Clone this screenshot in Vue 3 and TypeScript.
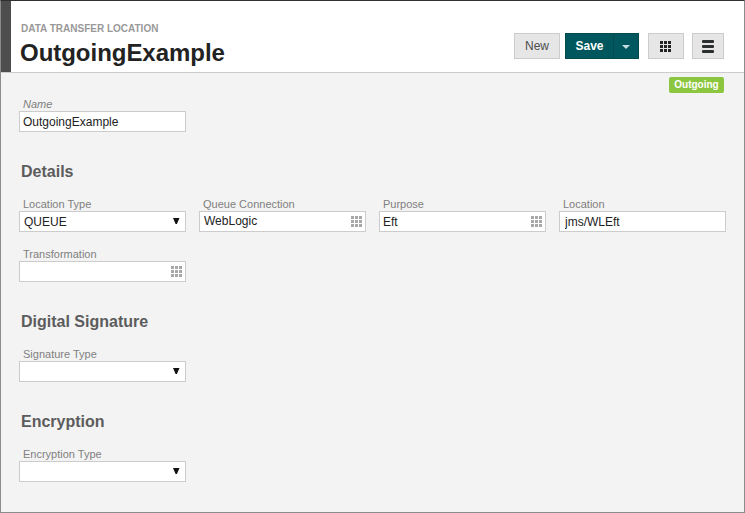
<script setup lang="ts">
import { reactive } from 'vue'

type Kind = 'text' | 'select' | 'lookup'

interface Field {
  id: string
  label: string
  value: string
  kind: Kind
}

interface Section {
  title: string
  fields: Field[]
}

const sections = reactive<Section[]>([
  {
    title: '',
    fields: [{ id: 'name', label: 'Name', value: 'OutgoingExample', kind: 'text' }],
  },
  {
    title: 'Details',
    fields: [
      { id: 'location-type', label: 'Location Type', value: 'QUEUE', kind: 'select' },
      { id: 'queue-connection', label: 'Queue Connection', value: 'WebLogic', kind: 'lookup' },
      { id: 'purpose', label: 'Purpose', value: 'Eft', kind: 'lookup' },
      { id: 'location', label: 'Location', value: 'jms/WLEft', kind: 'text' },
      { id: 'transformation', label: 'Transformation', value: '', kind: 'lookup' },
    ],
  },
  {
    title: 'Digital Signature',
    fields: [{ id: 'signature-type', label: 'Signature Type', value: '', kind: 'select' }],
  },
  {
    title: 'Encryption',
    fields: [{ id: 'encryption-type', label: 'Encryption Type', value: '', kind: 'select' }],
  },
])

const gridPath =
  'M0 0h3v3H0zM4 0h3v3H4zM8 0h3v3H8zM0 4h3v3H0zM4 4h3v3H4zM8 4h3v3H8zM0 8h3v3H0zM4 8h3v3H4zM8 8h3v3H8z'
</script>

<template>
  <div class="page">
    <header class="header">
      <div class="accent"></div>
      <div class="titles">
        <div class="kicker">DATA TRANSFER LOCATION</div>
        <h1>OutgoingExample</h1>
      </div>
      <div class="actions">
        <button class="btn new">New</button>
        <div class="split">
          <button class="save">Save</button>
          <button class="more" aria-label="More save options">
            <svg width="8" height="4" viewBox="0 0 8 4"><path d="M0 0h8L4 4z" fill="#c5dcde" /></svg>
          </button>
        </div>
        <button class="btn apps" aria-label="Apps">
          <svg width="11" height="11" viewBox="0 0 11 11"><path :d="gridPath" fill="#222" /></svg>
        </button>
        <button class="btn menu" aria-label="Menu">
          <svg width="12" height="13" viewBox="0 0 12 13">
            <rect width="12" height="3" rx="1" fill="#2b2f2f" />
            <rect y="5" width="12" height="3" rx="1" fill="#2b2f2f" />
            <rect y="10" width="12" height="3" rx="1" fill="#2b2f2f" />
          </svg>
        </button>
      </div>
    </header>

    <div class="status"><span class="badge">Outgoing</span></div>

    <main>
      <section v-for="section in sections" :key="section.title">
        <h2 v-if="section.title">{{ section.title }}</h2>
        <div class="fields">
          <div v-for="field in section.fields" :key="field.id" class="field" :class="field.id">
            <label :for="field.id">{{ field.label }}</label>
            <div class="control" :class="field.kind">
              <select v-if="field.kind === 'select'" :id="field.id" v-model="field.value">
                <option :value="field.value">{{ field.value }}</option>
              </select>
              <input v-else :id="field.id" v-model="field.value" type="text" spellcheck="false" />
              <svg v-if="field.kind === 'select'" width="7" height="6" viewBox="0 0 7 6">
                <path d="M0 0h6.5L3.9 6H2.6z" fill="#111" />
              </svg>
              <svg v-if="field.kind === 'lookup'" width="11" height="11" viewBox="0 0 11 11">
                <path :d="gridPath" fill="#a8a8a8" />
              </svg>
            </div>
          </div>
        </div>
      </section>
    </main>
  </div>
</template>

<style>
body {
  margin: 0;
}
</style>

<style scoped>
.page {
  box-sizing: border-box;
  width: 745px;
  height: 513px;
  overflow: hidden;
  background: #f3f3f3;
  border: 1px solid #8b8b8b;
  border-top-color: #303030;
  font-family: 'Liberation Sans', Arial, sans-serif;
}
button,
input,
select {
  box-sizing: border-box;
  margin: 0;
  padding: 0;
  font-family: inherit;
  outline: 0;
}
svg {
  display: block;
}
.header {
  box-sizing: border-box;
  display: flex;
  height: 72px;
  background: #fff;
  border-bottom: 1px solid #ccc;
}
.accent {
  width: 10px;
  height: 71px;
  flex: none;
  background: #4d4d4d;
}
.titles {
  flex: 1;
  padding: 22px 0 0 9px;
}
.kicker {
  padding-left: 1px;
  font-size: 10px;
  line-height: 12px;
  font-weight: bold;
  color: #999;
}
h1 {
  margin: 4px 0 0;
  font-size: 24px;
  line-height: 28px;
  letter-spacing: -0.03px;
  color: #222;
}
.actions {
  display: flex;
  padding: 32px 20px 0 0;
}
.btn,
.split {
  height: 26px;
}
.btn {
  display: flex;
  align-items: center;
  justify-content: center;
  border: 1px solid #ccc;
  background: #e6e6e6;
  color: #4d4d4d;
  font-size: 12px;
}
.new {
  width: 46px;
}
.split {
  display: flex;
  width: 74px;
  margin: 0 9px 0 5px;
}
.save,
.more {
  height: 26px;
  border: 1px solid #004a50;
  background: #00575d;
  color: #fff;
}
.save {
  width: 49px;
  font-size: 12px;
  font-weight: bold;
}
.more {
  display: flex;
  width: 25px;
  align-items: center;
  justify-content: center;
  padding-top: 2px;
  border-left: 0;
}
.apps {
  width: 36px;
  padding-right: 1px;
}
.menu {
  width: 32px;
  margin-left: 8px;
}
.status {
  display: flex;
  justify-content: flex-end;
  height: 24px;
  padding: 4px 20px 0 0;
  box-sizing: border-box;
}
.badge {
  width: 55px;
  height: 16px;
  border-radius: 2px;
  background: #8cc63f;
  color: #fff;
  font-size: 10px;
  line-height: 16px;
  font-weight: bold;
  text-align: center;
}
main {
  padding: 0 0 0 18px;
}
section {
  margin-bottom: 16px;
}
h2 {
  margin: 0 0 16px 2px;
  font-size: 16px;
  line-height: 18px;
  color: #5c5c5c;
}
.fields {
  display: grid;
  grid-template-columns: repeat(4, 167px);
  column-gap: 13px;
}
.field {
  height: 50px;
}
label {
  display: block;
  height: 14px;
  padding-left: 4px;
  font-size: 11px;
  line-height: 14px;
  color: #808080;
}
.name label {
  font-style: italic;
}
.control {
  box-sizing: border-box;
  display: flex;
  align-items: center;
  height: 21px;
  border: 1px solid #ccc;
  background: #fff;
}
input,
select {
  flex: 1;
  min-width: 0;
  height: 19px;
  border: 0;
  border-radius: 0;
  background: transparent;
  font-size: 12px;
  color: #222;
  appearance: none;
}
input {
  padding: 0 0 0 3px;
}
select {
  padding: 0 0 0 4px;
}
.queue-connection input {
  padding-bottom: 2px;
  padding-left: 4px;
}
.location input {
  padding-left: 5px;
}
.select svg {
  margin: 0 5px 2px 0;
}
.lookup svg {
  margin: 0 3px 0 0;
}
</style>
